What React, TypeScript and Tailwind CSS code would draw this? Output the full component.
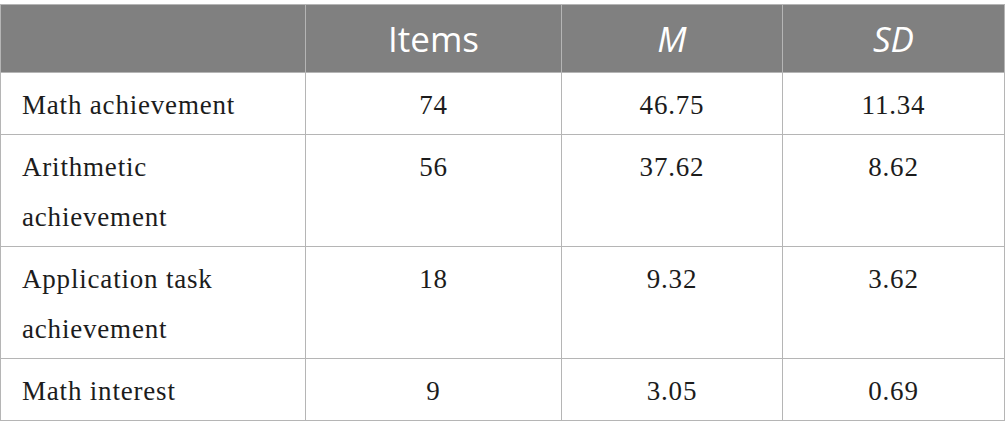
import React from "react";

const rows = [
  { label: ["Math achievement"], items: "74", m: "46.75", sd: "11.34" },
  { label: ["Arithmetic", "achievement"], items: "56", m: "37.62", sd: "8.62" },
  { label: ["Application task", "achievement"], items: "18", m: "9.32", sd: "3.62" },
  { label: ["Math interest"], items: "9", m: "3.05", sd: "0.69" },
];

export default function App() {
  const serif = "font-['Liberation_Serif','Times_New_Roman',serif]";
  const sans = "font-['Open_Sans','Noto_Sans',sans-serif]";
  return (
    <div className="w-[1005px] h-[434px] bg-white pt-[4px]">
      <table className="w-[1004px] table-fixed border-collapse">
        <colgroup>
          <col className="w-[305px]" />
          <col className="w-[256px]" />
          <col className="w-[221px]" />
          <col className="w-[222px]" />
        </colgroup>
        <thead>
          <tr className={`bg-[#808080] text-white h-[68px] ${sans} text-[35px]`}>
            <th className="border border-[#b5b5b5] font-normal"></th>
            <th className="border border-[#b5b5b5] font-normal text-center align-middle leading-none">Items</th>
            <th className="border border-[#b5b5b5] font-normal italic text-center align-middle leading-none">M</th>
            <th className="border border-[#b5b5b5] font-normal italic text-center align-middle leading-none">SD</th>
          </tr>
        </thead>
        <tbody className={`${serif} text-[27px] leading-[50px] text-[#1c1c1c] tracking-[0.03em]`}>
          {rows.map((r, i) => (
            <tr key={i}>
              <td className="border border-[#b5b5b5] pl-[21px] pt-[7px] pb-[4px] align-top">
                {r.label.map((l, j) => (
                  <div key={j}>{l}</div>
                ))}
              </td>
              <td className="border border-[#b5b5b5] pt-[7px] pb-[4px] align-top text-center">{r.items}</td>
              <td className="border border-[#b5b5b5] pt-[7px] pb-[4px] align-top text-center">{r.m}</td>
              <td className="border border-[#b5b5b5] pt-[7px] pb-[4px] align-top text-center">{r.sd}</td>
            </tr>
          ))}
        </tbody>
      </table>
    </div>
  );
}
